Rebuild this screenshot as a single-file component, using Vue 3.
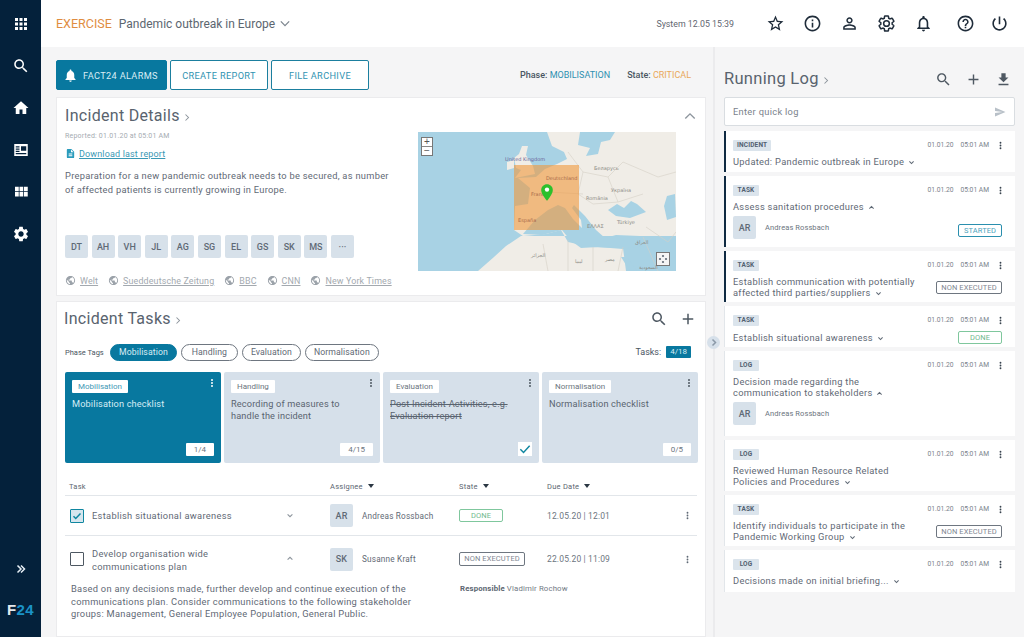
<script setup>
const icons = {
  apps: 'M4 8h4V4H4v4zm6 12h4v-4h-4v4zm-6 0h4v-4H4v4zm0-6h4v-4H4v4zm6 0h4v-4h-4v4zm6-10v4h4V4h-4zm-6 4h4V4h-4v4zm6 6h4v-4h-4v4zm0 6h4v-4h-4v4z',
  search: 'M15.5 14h-.79l-.28-.27C15.41 12.59 16 11.11 16 9.5 16 5.91 13.09 3 9.5 3S3 5.91 3 9.5 5.91 16 9.5 16c1.61 0 3.09-.59 4.23-1.57l.27.28v.79l5 4.99L20.49 19l-4.99-5zm-6 0C7.01 14 5 11.99 5 9.5S7.01 5 9.5 5 14 7.01 14 9.5 11.99 14 9.5 14z',
  home: 'M10 20v-6h4v6h5v-8h3L12 3 2 12h3v8z',
  news: 'M3 4h18v16H3zM5 7v1.500h5V7zm0 3v1.500h5V10zm0 3v1.500h5V13zm0 3v1.500h14V16zm7-9v6h7V7z',
  module: 'M4 11h5V5H4v6zm0 7h5v-6H4v6zm6 0h5v-6h-5v6zm6 0h5v-6h-5v6zm-6-7h5V5h-5v6zm6-6v6h5V5h-5z',
  settings: 'M19.14 12.94c.04-.3.06-.61.06-.94 0-.32-.02-.64-.07-.94l2.03-1.58c.18-.14.23-.41.12-.61l-1.92-3.32c-.12-.22-.37-.29-.59-.22l-2.39.96c-.5-.38-1.03-.7-1.62-.94l-.36-2.54c-.04-.24-.24-.41-.48-.41h-3.84c-.24 0-.43.17-.47.41l-.36 2.54c-.59.24-1.13.57-1.62.94l-2.39-.96c-.22-.08-.47 0-.59.22L2.74 8.87c-.12.21-.08.47.12.61l2.03 1.58c-.05.3-.09.63-.09.94s.02.64.07.94l-2.03 1.58c-.18.14-.23.41-.12.61l1.92 3.32c.12.22.37.29.59.22l2.39-.96c.5.38 1.03.7 1.62.94l.36 2.54c.05.24.24.41.48.41h3.84c.24 0 .44-.17.47-.41l.36-2.54c.59-.24 1.13-.56 1.62-.94l2.39.96c.22.08.47 0 .59-.22l1.92-3.32c.12-.22.07-.47-.12-.61l-2.01-1.58zM12 15.6c-1.98 0-3.6-1.62-3.6-3.6s1.62-3.6 3.6-3.6 3.6 1.62 3.6 3.6-1.62 3.6-3.6 3.6z',
  star: 'M22 9.24l-7.19-.62L12 2 9.19 8.63 2 9.24l5.46 4.73L5.82 21 12 17.27 18.18 21l-1.63-7.03L22 9.24zM12 15.4l-3.76 2.27 1-4.28-3.32-2.88 4.38-.38L12 6.1l1.71 4.04 4.38.38-3.32 2.88 1 4.28L12 15.4z',
  info: 'M11 7h2v2h-2zm0 4h2v6h-2zm1-9C6.48 2 2 6.48 2 12s4.48 10 10 10 10-4.48 10-10S17.52 2 12 2zm0 18c-4.41 0-8-3.59-8-8s3.59-8 8-8 8 3.59 8 8-3.59 8-8 8z',
  person: 'M12 5.900c1.160 0 2.100.94 2.100 2.100s-.94 2.100-2.100 2.100S9.900 9.160 9.900 8s.94-2.100 2.100-2.100m0 9c2.970 0 6.100 1.460 6.100 2.100v1.100H5.900V17c0-.64 3.130-2.100 6.100-2.100M12 4C9.790 4 8 5.790 8 8s1.790 4 4 4 4-1.790 4-4-1.790-4-4-4zm0 9c-2.670 0-8 1.340-8 4v3h16v-3c0-2.660-5.330-4-8-4z',
  bell: 'M12 22c1.100 0 2-.9 2-2h-4c0 1.100.9 2 2 2zm6-6v-5c0-3.070-1.630-5.640-4.500-6.320V4c0-.83-.67-1.500-1.500-1.500s-1.500.67-1.500 1.500v.68C7.640 5.360 6 7.920 6 11v5l-2 2v1h16v-1l-2-2zm-2 1H8v-6c0-2.480 1.510-4.500 4-4.500s4 2.020 4 4.500v6z',
  bellSolid: 'M12 22c1.100 0 2-.9 2-2h-4c0 1.100.89 2 2 2zm6-6v-5c0-3.070-1.640-5.640-4.500-6.320V4c0-.83-.67-1.500-1.500-1.500s-1.500.67-1.500 1.500v.68C7.630 5.360 6 7.920 6 11v5l-2 2v1h16v-1l-2-2z',
  help: 'M11 18h2v-2h-2v2zm1-16C6.480 2 2 6.480 2 12s4.480 10 10 10 10-4.480 10-10S17.520 2 12 2zm0 18c-4.410 0-8-3.590-8-8s3.590-8 8-8 8 3.590 8 8-3.590 8-8 8zm0-14c-2.210 0-4 1.790-4 4h2c0-1.100.9-2 2-2s2 .9 2 2c0 2-3 1.750-3 5h2c0-2.250 3-2.500 3-5 0-2.210-1.790-4-4-4z',
  power: 'M13 3h-2v10h2V3zm4.830 2.170l-1.420 1.420C17.990 7.860 19 9.810 19 12c0 3.870-3.130 7-7 7s-7-3.130-7-7c0-2.190 1.010-4.140 2.580-5.420L6.170 5.170C4.230 6.820 3 9.260 3 12c0 4.970 4.030 9 9 9s9-4.030 9-9c0-2.740-1.230-5.180-3.170-6.830z',
  download: 'M19 9h-4V3H9v6H5l7 7 7-7zM5 18v2h14v-2H5z',
  send: 'M2.010 21L23 12 2.010 3 2 10l15 2-15 2z',
  add: 'M19 13h-6v6h-2v-6H5v-2h6V5h2v6h6v2z',
  doc: 'M14 2H6c-1.100 0-2 .9-2 2v16c0 1.100.89 2 1.990 2H18c1.100 0 2-.9 2-2V8l-6-6zm2 16H8v-2h8v2zm0-4H8v-2h8v2zm-3-5V3.500L18.500 9H13z',
  globe: 'M12 2C6.480 2 2 6.480 2 12s4.480 10 10 10 10-4.480 10-10S17.520 2 12 2zm-1 17.930c-3.950-.49-7-3.850-7-7.930 0-.62.08-1.210.21-1.790L9 15v1c0 1.100.9 2 2 2v1.930zm6.900-2.540c-.26-.81-1-1.390-1.900-1.390h-1v-3c0-.55-.45-1-1-1H8v-2h2c.55 0 1-.45 1-1V7h2c1.100 0 2-.9 2-2v-.41c2.930 1.190 5 4.060 5 7.410 0 2.080-.8 3.970-2.100 5.390z',
  more: 'M12 8a2 2 0 1 0 0-4 2 2 0 0 0 0 4zm0 2a2 2 0 1 0 0 4 2 2 0 0 0 0-4zm0 6a2 2 0 1 0 0 4 2 2 0 0 0 0-4z'
}

const sideTop = [
  { d: icons.apps, cls: 'sn-a' },
  { d: icons.search, cls: 'sn-b' },
  { d: icons.home, cls: 'sn-c' },
  { d: icons.news, cls: 'sn-d' },
  { d: icons.module, cls: 'sn-e' },
  { d: icons.settings, cls: 'sn-f' }
]
const headIcons = [
  { d: icons.star, cls: '' },
  { d: icons.info, cls: '' },
  { d: icons.person, cls: '' },
  { d: icons.settings, cls: 'hi-gear' },
  { d: icons.bell, cls: '' },
  { d: icons.help, cls: 'hi-help' },
  { d: icons.power, cls: 'hi-power' }
]
const people = ['DT', 'AH', 'VH', 'JL', 'AG', 'SG', 'EL', 'GS', 'SK', 'MS', '···']
const sources = ['Welt', 'Sueddeutsche Zeitung', 'BBC', 'CNN', 'New York Times']
const phases = ['Mobilisation', 'Handling', 'Evaluation', 'Normalisation']
const phaseCards = [
  { tag: 'Mobilisation', title: 'Mobilisation checklist', count: '1/4', active: true },
  { tag: 'Handling', title: 'Recording of measures to handle the incident', count: '4/15' },
  { tag: 'Evaluation', title: 'Post-Incident-Activities, e.g. Evaluation report', done: true },
  { tag: 'Normalisation', title: 'Normalisation checklist', count: '0/5' }
]
const logs = [
  { type: 'INCIDENT', lines: ['Updated: Pandemic outbreak in Europe'], open: false, dark: true, h: 41 },
  { type: 'TASK', lines: ['Assess sanitation procedures'], open: true, dark: true, h: 71, person: 'Andreas Rossbach', ini: 'AR', status: 'STARTED', stCls: 'st-start', stBottom: true },
  { type: 'TASK', lines: ['Establish communication with potentially', 'affected third parties/suppliers'], open: false, dark: true, h: 51, status: 'NON EXECUTED', stCls: 'st-non' },
  { type: 'TASK', lines: ['Establish situational awareness'], open: false, h: 41, status: 'DONE', stCls: 'st-done' },
  { type: 'LOG', lines: ['Decision made regarding the', 'communication to stakeholders'], open: true, h: 85, person: 'Andreas Rossbach', ini: 'AR' },
  { type: 'LOG', lines: ['Reviewed Human Resource Related', 'Policies and Procedures'], open: false, h: 51 },
  { type: 'TASK', lines: ['Identify individuals to participate in the', 'Pandemic Working Group'], open: false, h: 51, status: 'NON EXECUTED', stCls: 'st-non' },
  { type: 'LOG', lines: ['Decisions made on initial briefing...'], open: false, h: 42 }
]
const borders = [
  'M150 20L165 40L190 45L205 30', 'M165 40L160 62L175 72', 'M190 45L200 70', 'M205 30L240 45L258 40',
  'M130 60L165 62', 'M175 72L200 70L225 62', 'M125 112L130 139', 'M175 115L175 139', 'M205 115L200 139',
  'M150 108L150 139', 'M228 95L250 110L258 100', 'M225 105L240 139'
]
const mapLabels = [
  { x: 87, y: 29, t: 'United Kingdom', c: '#6a6498' },
  { x: 128, y: 48, t: 'Deutschland', c: '#a96a4a' },
  { x: 176, y: 38, t: 'Беларусь', c: '#8c8c85' },
  { x: 193, y: 60, t: 'Україна', c: '#8c8c85' },
  { x: 168, y: 68, t: 'România', c: '#8c8c85' },
  { x: 113, y: 64, t: 'France', c: '#a96a4a' },
  { x: 100, y: 90, t: 'España', c: '#a96a4a' },
  { x: 199, y: 92, t: 'Türkiye', c: '#8c8c85' },
  { x: 169, y: 96, t: 'ΕΛΛΑΣ', c: '#8c8c85' },
  { x: 113, y: 125, t: 'الجزائر', c: '#8c8c85' },
  { x: 157, y: 131, t: 'ليبيا', c: '#8c8c85' },
  { x: 187, y: 129, t: 'مصر', c: '#8c8c85' },
  { x: 217, y: 112, t: 'العراق', c: '#8c8c85' },
  { x: 221, y: 137, t: 'السعودية', c: '#8c8c85' }
]
</script>

<template>
  <div class="app">
    <aside class="side">
      <svg v-for="n in sideTop" :key="n.cls" :class="['side-icon', n.cls]" viewBox="0 0 24 24"><path :d="n.d" /></svg>
      <div class="side-fill"></div>
      <svg class="side-more" viewBox="0 0 24 24"><path d="M5 5l7 7-7 7M12 5l7 7-7 7" /></svg>
      <div class="logo"><span>F</span><b>24</b></div>
    </aside>

    <div class="body">
      <header class="top">
        <span class="exercise">EXERCISE</span>
        <span class="incident">Pandemic outbreak in Europe</span>
        <svg class="chev-top" viewBox="0 0 12 8"><path d="M1 1.500l5 5 5-5" /></svg>
        <span class="grow"></span>
        <span class="system">System 12.05 15:39</span>
        <div class="head-icons">
          <svg v-for="(h, i) in headIcons" :key="i" :class="h.cls" viewBox="0 0 24 24"><path :d="h.d" /></svg>
        </div>
      </header>

      <div class="columns">
        <main class="left">
          <div class="toolbar">
            <button class="btn btn-solid">
              <svg viewBox="0 0 24 24"><path :d="icons.bellSolid" /></svg>
              FACT24 ALARMS
            </button>
            <button class="btn btn-a">CREATE REPORT</button>
            <button class="btn btn-b">FILE ARCHIVE</button>
            <span class="grow"></span>
            <span class="phase"><b>Phase:</b> <i>MOBILISATION</i></span>
            <span class="state"><b>State:</b> <i>CRITICAL</i></span>
          </div>

          <section class="card details">
            <div class="details-text">
              <h2 class="h-title">Incident Details <svg class="gt" viewBox="0 0 8 12"><path d="M2 2l4 4-4 4" /></svg></h2>
              <div class="reported">Reported: 01.01.20 at 05:01 AM</div>
              <a class="download"><svg viewBox="0 0 24 24"><path :d="icons.doc" /></svg><span>Download last report</span></a>
              <p class="desc">Preparation for a new pandemic outbreak needs to be secured, as number of affected patients is currently growing in Europe.</p>
              <div class="grow"></div>
              <div class="people">
                <span v-for="p in people" :key="p" class="avatar">{{ p }}</span>
              </div>
              <div class="sources">
                <span v-for="s in sources" :key="s" class="source">
                  <svg viewBox="0 0 24 24"><path :d="icons.globe" /></svg><u>{{ s }}</u>
                </span>
              </div>
            </div>

            <div class="map">
              <svg class="map-art" viewBox="0 0 258 139" preserveAspectRatio="none">
                <rect width="258" height="139" fill="#a8d2e4" />
                <path fill="#f0ede7" d="M129 0L134 14L146 20L149 27L139 32L127 37L118 45L100 46L112 56L110 72L97 74L96 98L105 104L128 102L143 98L150 110L172 115L205 116L208 139L60 139L76 125L88 114L103 104L258 104L258 0z" />
                <path fill="#f0ede7" d="M96 26L101 22L104 14L110 14L108 23L115 34L117 42L97 46L103 38L98 36z" />
                <path fill="#f0ede7" d="M89 30L96 28L96 36L89 38z" />
                <path fill="#a8d2e4" d="M105 102L117 88L130 78L140 73L147 76L155 87L164 96L163 88L154 76L156 73L167 84L178 98L187 106L198 103L222 104L222 114L205 117L180 115L163 116L152 108L144 98L124 103z" />
                <path fill="#a8d2e4" d="M162 0L197 0L192 8L183 10L180 22L168 24L172 16L160 13z" />
                <path fill="#a8d2e4" d="M190 78L199 72L206 76L213 69L219 72L228 80L212 86L198 84z" />
                <path fill="#a8d2e4" d="M249 64L257 62L258 85L249 88L246 74z" />
                <path fill="#a8d2e4" d="M203 125L209 125L219 139L212 139z" />
                <path fill="#a8d2e4" d="M250 128L258 125L258 139L252 139z" />
                <path v-for="(b, i) in borders" :key="i" :d="b" fill="none" stroke="#d5d0c6" stroke-width=".6" />
                <rect x="96" y="33" width="65" height="65" fill="#f0983c" fill-opacity=".6" />
                <text v-for="l in mapLabels" :key="l.t" :x="l.x" :y="l.y" :fill="l.c" class="map-label">{{ l.t }}</text>
              </svg>
              <svg class="pin" viewBox="0 0 24 24"><path fill="#2cc02c" d="M12 2C8.130 2 5 5.130 5 9c0 5.250 7 13 7 13s7-7.750 7-13c0-3.870-3.130-7-7-7z" /><circle cx="12" cy="8.500" r="2.600" fill="#fff" /></svg>
              <div class="zoom-ctl"><span>+</span><span>−</span></div>
              <div class="fullscreen"><svg viewBox="0 0 24 24"><circle cx="12" cy="6" r="2.200" /><circle cx="12" cy="18" r="2.200" /><circle cx="6" cy="12" r="2.200" /><circle cx="18" cy="12" r="2.200" /></svg></div>
            </div>
            <svg class="collapse" viewBox="0 0 14 9"><path d="M1.500 7.500L7 2l5.500 5.500" /></svg>
          </section>

          <section class="card tasks">
            <div class="tasks-head">
              <h2 class="h-title">Incident Tasks <svg class="gt" viewBox="0 0 8 12"><path d="M2 2l4 4-4 4" /></svg></h2>
              <span class="grow"></span>
              <svg class="act" viewBox="0 0 24 24"><path :d="icons.search" /></svg>
              <svg class="act" viewBox="0 0 24 24"><path :d="icons.add" /></svg>
            </div>
            <div class="phase-row">
              <span class="phase-label">Phase Tags</span>
              <span v-for="(p, i) in phases" :key="p" :class="['pill', { 'pill-on': i === 0 }]">{{ p }}</span>
              <span class="grow"></span>
              <span class="tasks-label">Tasks:</span>
              <span class="tasks-count">4/18</span>
            </div>
            <div class="phase-cards">
              <div v-for="c in phaseCards" :key="c.tag" :class="['pc', { 'pc-on': c.active }]">
                <span class="pc-tag">{{ c.tag }}</span>
                <svg class="pc-more" viewBox="0 0 24 24"><path :d="icons.more" /></svg>
                <div :class="['pc-title', { 'pc-done': c.done }]">{{ c.title }}</div>
                <span v-if="c.count" class="pc-count">{{ c.count }}</span>
                <span v-else class="pc-check"><svg viewBox="0 0 24 24"><path d="M4 12.500l5.500 5.500L20 6.500" /></svg></span>
              </div>
            </div>

            <div class="t-grid t-head">
              <span>Task</span>
              <span>Assignee <em class="caret"></em></span>
              <span>State <em class="caret"></em></span>
              <span>Due Date <em class="caret"></em></span>
              <span></span>
            </div>
            <div class="t-grid t-row t-row-1">
              <div class="t-task">
                <span class="check check-on"><svg viewBox="0 0 24 24"><path d="M5 12.500l4.500 4.500L19 7" /></svg></span>
                <span class="t-name">Establish situational awareness</span>
                <svg class="t-chev" viewBox="0 0 10 6"><path d="M2 1.500l3 3 3-3" /></svg>
              </div>
              <div class="t-who"><span class="avatar">AR</span><span>Andreas Rossbach</span></div>
              <div class="t-state"><span class="status st-done">DONE</span></div>
              <div class="t-due">12.05.20 | 12:01</div>
              <svg class="t-more" viewBox="0 0 24 24"><path :d="icons.more" /></svg>
            </div>
            <div class="t-grid t-row t-row-2">
              <div class="t-task">
                <span class="check"></span>
                <span class="t-name">Develop organisation wide<br />communications plan</span>
                <svg class="t-chev" viewBox="0 0 10 6"><path d="M2 4.500l3-3 3 3" /></svg>
              </div>
              <div class="t-who"><span class="avatar">SK</span><span>Susanne Kraft</span></div>
              <div class="t-state"><span class="status st-non st-tall">NON EXECUTED</span></div>
              <div class="t-due">22.05.20 | 11:09</div>
              <svg class="t-more" viewBox="0 0 24 24"><path :d="icons.more" /></svg>
            </div>
            <div class="t-detail">
              <p>Based on any decisions made, further develop and continue execution of the communications plan. Consider communications to the following stakeholder groups: Management, General Employee Population, General Public.</p>
              <div class="resp"><b>Responsible</b> Vladimir Rochow</div>
            </div>
          </section>
        </main>

        <aside class="log">
          <span class="handle"><svg viewBox="0 0 8 12"><path d="M2 2l4 4-4 4" /></svg></span>
          <div class="log-head">
            <h2 class="h-title">Running Log <svg class="gt" viewBox="0 0 8 12"><path d="M2 2l4 4-4 4" /></svg></h2>
            <span class="grow"></span>
            <svg class="act" viewBox="0 0 24 24"><path :d="icons.search" /></svg>
            <svg class="act" viewBox="0 0 24 24"><path :d="icons.add" /></svg>
            <svg class="act" viewBox="0 0 24 24"><path :d="icons.download" /></svg>
          </div>
          <div class="quick">
            <span>Enter quick log</span>
            <svg viewBox="0 0 24 24"><path :d="icons.send" /></svg>
          </div>
          <div class="entries">
            <article v-for="(e, i) in logs" :key="i" :class="['entry', { dark: e.dark }]" :style="{ height: e.h + 'px' }">
              <div class="e-top">
                <span class="e-badge">{{ e.type }}</span>
                <span class="grow"></span>
                <span class="e-date">01.01.20</span>
                <span class="e-time">05:01 AM</span>
                <svg class="e-more" viewBox="0 0 24 24"><path :d="icons.more" /></svg>
              </div>
              <div class="e-mid">
                <div class="e-title">
                  <template v-for="(l, j) in e.lines" :key="j">{{ l }}<br v-if="j < e.lines.length - 1" /></template>
                  <svg class="e-chev" viewBox="0 0 10 6"><path :d="e.open ? 'M2 4.500l3-3 3 3' : 'M2 1.500l3 3 3-3'" /></svg>
                </div>
                <span v-if="e.status && !e.stBottom" :class="['status', 'e-status', e.stCls]">{{ e.status }}</span>
              </div>
              <div v-if="e.person" class="e-person">
                <span class="avatar">{{ e.ini }}</span>
                <span class="e-name">{{ e.person }}</span>
                <span class="grow"></span>
                <span v-if="e.stBottom" :class="['status', 'e-status', e.stCls]">{{ e.status }}</span>
              </div>
            </article>
          </div>
        </aside>
      </div>
    </div>
  </div>
</template>

<style>
html, body { margin: 0; background: #f5f5f6; overflow: hidden; }
</style>

<style scoped>
.app { display: flex; width: 1024px; height: 637px; overflow: hidden; font-family: Roboto, "Liberation Sans", sans-serif; color: #5f6975; background: #f5f5f6; }
.grow { flex: 1; }

/* sidebar */
.side { width: 41px; flex: none; background: #04213b; display: flex; flex-direction: column; align-items: center; padding-top: 15px; box-sizing: border-box; }
.side-icon { width: 18px; height: 18px; fill: #fff; margin-bottom: 24px; flex: none; }
.side-fill { flex: 1; }
.side-more { width: 12px; height: 12px; fill: none; stroke: #e6eef5; stroke-width: 3; margin-bottom: 27px; }
.logo { font: 700 15px/1 "Liberation Sans", sans-serif; color: #e4e9ee; margin-bottom: 20px; letter-spacing: .3px; }
.logo b { color: #1b93c7; }

/* top bar */
.body { flex: 1; display: flex; flex-direction: column; min-width: 0; }
.top { height: 47px; flex: none; background: #fff; display: flex; align-items: center; padding-left: 15px; box-sizing: border-box; }
.exercise { color: #df8d3f; font-size: 12.500px; margin-right: 7px; }
.incident { color: #5c6670; font-size: 12px; letter-spacing: 0; }
.chev-top { width: 10px; height: 7px; fill: none; stroke: #7d868f; stroke-width: 1.500; margin-left: 5px; }
.system { font-size: 8.800px; color: #5f6670; margin-right: 32px; }
.head-icons { display: flex; gap: 18px; margin-right: 15px; }
.head-icons svg { width: 19px; height: 19px; fill: #1f2c3a; }
.head-icons .hi-gear { fill: none; stroke: #1f2c3a; stroke-width: 1.900; }
.head-icons .hi-help { margin-left: 5px; }
.head-icons .hi-power { margin-left: -3px; }

.columns { flex: 1; display: flex; min-height: 0; }

/* left column */
.left { width: 674px; flex: none; box-sizing: border-box; padding: 13px 7px 0 15px; border-right: 2px solid #ebebed; display: flex; flex-direction: column; }
.toolbar { display: flex; align-items: center; height: 30px; margin-bottom: 7px; }
.btn { height: 30px; border-radius: 2px; font: 400 9.200px Roboto, sans-serif; letter-spacing: .35px; box-sizing: border-box; display: inline-flex; align-items: center; justify-content: center; margin-right: 3px; background: #fff; border: 1px solid #1b7f9f; color: #2f93b1; padding: 0; }
.btn-solid { width: 111px; background: #08789f; border-color: #08789f; color: #d8edf5; justify-content: flex-start; padding-left: 6px; gap: 5px; }
.btn-solid svg { width: 15px; height: 15px; fill: #fff; }
.btn-a { width: 98px; }
.btn-b { width: 98px; }
.phase, .state { font-size: 9px; }
.phase b, .state b { font-weight: 500; color: #4a5562; }
.phase i, .state i { font-style: normal; }
.phase { margin-right: 17px; }
.phase i { color: #2f90b0; }
.state { margin-right: 15px; }
.state i { color: #e9a85a; }

.card { background: #fff; border: 1px solid #ebebed; box-sizing: border-box; }
.h-title { margin: 0; font-weight: 400; font-size: 16px; line-height: 20px; color: #59636e; letter-spacing: .3px; display: flex; align-items: center; }
.gt { width: 6px; height: 9px; fill: none; stroke: #8c949c; stroke-width: 1.400; margin-left: 4px; margin-top: 2px; }

.details { height: 199px; display: flex; position: relative; padding: 8px 30px 0 8px; margin-bottom: 5px; }
.details-text { width: 353px; display: flex; flex-direction: column; flex: none; }
.reported { font-size: 7px; color: #a5abb1; margin-top: 6px; letter-spacing: .2px; }
.download { display: flex; align-items: center; gap: 3px; color: #3a98b4; font-size: 9px; margin-top: 8px; letter-spacing: .15px; text-decoration: underline; }
.download svg { width: 11px; height: 11px; fill: #2a9bbc; }
.desc { margin: 10px 0 0; font-size: 9.300px; line-height: 13.500px; letter-spacing: .28px; width: 325px; }
.people { display: flex; gap: 3.600px; margin-bottom: 17px; }
.avatar { width: 23px; height: 23px; background: #d7e1ea; border-radius: 2px; display: inline-flex; align-items: center; justify-content: center; font-size: 9px; font-weight: 500; color: #5f6a76; flex: none; }
.sources { display: flex; gap: 10px; margin-bottom: 9px; font-size: 8.900px; color: #a3a9af; white-space: nowrap; letter-spacing: .15px; }
.source { display: inline-flex; align-items: center; gap: 4px; }
.source svg { width: 11px; height: 11px; fill: #9ba2a9; }

.map { width: 258px; height: 139px; position: relative; margin-top: 26px; flex: none; overflow: hidden; }
.map-art { width: 100%; height: 100%; display: block; }
.map-label { font: 5px "DejaVu Sans", sans-serif; }
.pin { position: absolute; left: 119px; top: 50px; width: 20px; height: 21px; }
.zoom-ctl { position: absolute; left: 3px; top: 5px; width: 10px; display: flex; flex-direction: column; border: 1px solid #777; background: #fff; }
.zoom-ctl span { height: 8px; font: 10px/8px "Liberation Sans", sans-serif; text-align: center; color: #555; }
.zoom-ctl span + span { border-top: 1px solid #888; }
.fullscreen { position: absolute; right: 6px; bottom: 5px; width: 14px; height: 14px; border: 1px solid #777; background: #f4f4f4; box-sizing: border-box; }
.fullscreen svg { width: 100%; height: 100%; display: block; fill: #5f6975; }
.collapse { position: absolute; right: 9px; top: 14px; width: 12px; height: 8px; fill: none; stroke: #8d959d; stroke-width: 1.600; }

.tasks { flex: 1; padding: 7px 8px 0 8px; min-height: 0; overflow: hidden; }
.tasks-head { display: flex; align-items: center; height: 20px; }
.tasks-head .h-title { margin-left: -1px; }
.act { width: 18px; height: 18px; fill: #4e5862; margin-left: 11px; }
.phase-row { display: flex; align-items: center; height: 18px; margin-top: 14px; gap: 4px; }
.phase-label { font-size: 7.500px; color: #4a5562; margin-right: 3px; width: 38px; white-space: nowrap; }
.pill { height: 17px; min-width: 57px; text-align: center; box-sizing: border-box; border: 1px solid #6e7680; border-radius: 9px; font-size: 8.700px; line-height: 15px; padding: 0 8px; color: #5f6975; letter-spacing: .1px; }
.pill-on { background: #08789f; border-color: #08789f; color: #d9edf4; }
.tasks-label { font-size: 9px; color: #4a5562; }
.tasks-count { background: #08789f; color: #d9edf4; font-size: 8px; padding: 0 4px; height: 12px; line-height: 12px; border-radius: 1px; margin-left: 1px; margin-right: 6px; }

.phase-cards { display: grid; grid-template-columns: repeat(4, 156px); gap: 3px; margin-top: 11px; }
.pc { height: 91px; background: #d6e0ea; border-radius: 2px; position: relative; padding: 8px 7px; box-sizing: border-box; color: #5a6470; }
.pc-on { background: #08789f; color: #d6edf5; }
.pc-tag { display: block; width: fit-content; background: #fff; color: #6c7580; font-size: 8px; line-height: 13px; padding: 0 6px; border-radius: 1px; }
.pc-on .pc-tag { color: #3f98b5; }
.pc-more { position: absolute; right: 3px; top: 5px; width: 12px; height: 12px; fill: #4e5862; }
.pc-on .pc-more { fill: #fff; }
.pc-title { font-size: 9.200px; line-height: 11.500px; margin-top: 5px; letter-spacing: .15px; width: 130px; }
.pc-done { text-decoration: line-through; }
.pc-count { position: absolute; right: 7px; bottom: 7px; background: #fff; font-size: 8px; line-height: 13px; color: #6c7580; padding: 0 8px; border-radius: 1px; }
.pc-check { position: absolute; right: 7px; bottom: 7px; width: 14px; height: 14px; background: #fff; }
.pc-check svg { display: block; width: 14px; height: 14px; fill: none; stroke: #0f86a0; stroke-width: 2.500; }

.t-grid { display: grid; grid-template-columns: 265px 129px 88px 135px 15px; width: 632px; }
.t-head { height: 33px; align-items: center; padding-top: 15px; box-sizing: border-box; font-size: 7.500px; color: #5c6671; letter-spacing: .25px; border-bottom: 1px solid #e2e6ea; padding-left: 4px; grid-template-columns: 261px 129px 88px 135px 15px; }
.caret { display: inline-block; width: 0; height: 0; border: 3.500px solid transparent; border-top: 4px solid #2b3743; border-bottom: 0; margin-left: 3px; vertical-align: 1px; }
.t-row { align-items: center; font-size: 9.500px; color: #5f6975; }
.t-row-1 { height: 39px; border-bottom: 1px solid #e2e6ea; }
.t-row-2 { height: 46px; }
.t-row-2 .t-name { padding-top: 3px; }
.t-task { display: flex; align-items: center; padding-left: 5px; position: relative; }
.check { width: 12px; height: 12px; border: 1px solid #4e5862; border-radius: 1px; flex: none; margin-right: 8px; }
.check-on { border: 1px solid #0f86a0; background: #d6e6ee; }
.check-on svg { display: block; width: 12px; height: 12px; fill: none; stroke: #0f86a0; stroke-width: 3; }
.t-name { font-size: 9.300px; line-height: 12.500px; letter-spacing: .3px; padding-top: 2px; }
.t-chev { position: absolute; left: 221px; top: 50%; margin-top: -3px; width: 8px; height: 5px; fill: none; stroke: #8d959d; stroke-width: 1.400; }
.t-who { display: flex; align-items: center; gap: 9px; font-size: 8.200px; letter-spacing: .2px; }
.t-state { display: flex; align-items: center; }
.t-due { font-size: 8.500px; letter-spacing: .15px; color: #6c7580; }
.t-more { width: 11px; height: 11px; fill: #5f6975; }

.status { display: inline-block; box-sizing: border-box; height: 13px; line-height: 11px; font-size: 7.500px; text-align: center; border-radius: 2px; letter-spacing: .1px; flex: none; }
.st-done { border: 1px solid #7fc79d; color: #6fb98d; width: 44px; }
.st-non { border: 1px solid #6e7680; color: #7f8791; width: 66px; }
.st-tall { height: 14px; line-height: 12px; }
.st-start { border: 1px solid #2a8fae; color: #4ea3bd; width: 44px; }

.t-detail { display: grid; grid-template-columns: 395px 1fr; margin-top: 1px; }
.t-detail p { margin: 0; padding-left: 6px; font-size: 9.300px; line-height: 12.500px; letter-spacing: .28px; color: #5f6975; width: 350px; }
.resp { font-size: 7.800px; color: #727a84; letter-spacing: .15px; margin-top: 1px; }
.resp b { font-weight: 700; color: #5c6671; }

/* running log */
.log { flex: 1; min-width: 0; position: relative; padding: 22px 9px 0 9px; box-sizing: border-box; background: #f5f5f6; }
.handle { position: absolute; left: -8px; top: 289px; width: 13px; height: 13px; border-radius: 50%; background: #d6e0ea; display: flex; align-items: center; justify-content: center; }
.handle svg { width: 6px; height: 9px; fill: none; stroke: #8b99a8; stroke-width: 2; }
.log-head { display: flex; align-items: center; height: 20px; margin-bottom: 8px; }
.log-head .h-title { font-size: 16.500px; }
.log-head .act { margin-left: 13px; width: 17px; height: 17px; }
.log-head .act:last-child { margin-right: 3px; }
.quick { height: 29px; background: #fff; border: 1px solid #d9dde1; border-radius: 2px; box-sizing: border-box; display: flex; align-items: center; padding: 0 8px; font-size: 9.300px; letter-spacing: .3px; color: #7a828b; justify-content: space-between; }
.quick svg { width: 12px; height: 12px; fill: #b8c0c8; }
.entries { display: flex; flex-direction: column; gap: 4px; margin-top: 5px; }
.entry { background: #fff; box-sizing: border-box; border-left: 1px solid #e2e6ea; padding: 8px 9px 0 8px; flex: none; }
.entry.dark { border-left: 2px solid #0f2a42; padding-left: 7px; }
.e-top { display: flex; align-items: center; height: 12px; }
.e-badge { background: #dbe4ec; color: #526070; font-size: 6.500px; font-weight: 700; line-height: 11px; padding: 0 4px; min-width: 26px; text-align: center; box-sizing: border-box; border-radius: 1px; letter-spacing: .15px; }
.e-date, .e-time { font-size: 6.700px; color: #7a828b; }
.e-time { margin-left: 7px; }
.e-more { width: 11px; height: 11px; fill: #39444f; margin-left: 6px; }
.e-mid { display: flex; align-items: center; justify-content: space-between; margin-top: 5px; }
.e-title { font-size: 9.300px; line-height: 11px; letter-spacing: .3px; color: #5f6975; }
.e-chev { width: 7px; height: 5px; margin-left: 4px; fill: none; stroke: #5f6975; stroke-width: 1.500; }
.e-status { margin-right: 4px; }
.e-person { display: flex; align-items: center; gap: 9px; margin-top: 4px; }
.e-name { font-size: 7.500px; color: #6c7580; letter-spacing: .1px; }
.e-person .e-status { margin-top: 5px; }
</style>
